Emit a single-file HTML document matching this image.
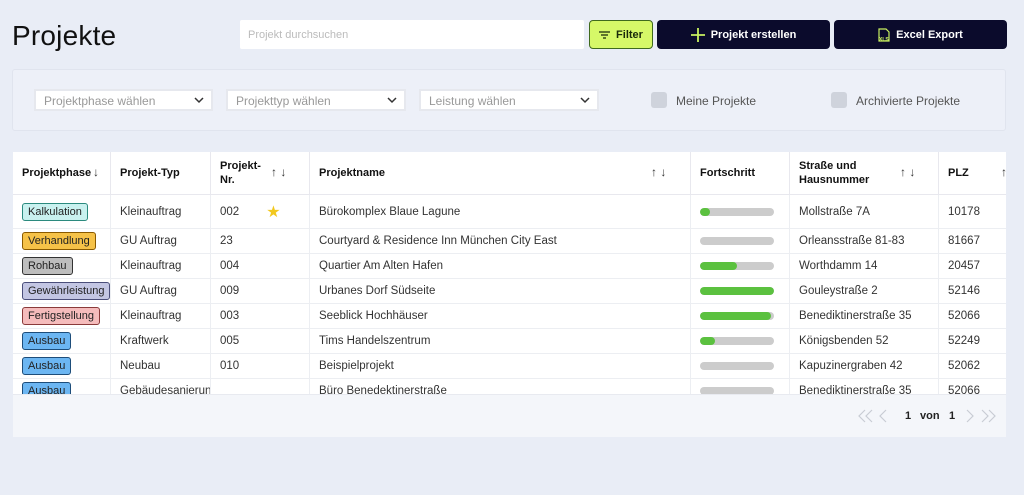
<!DOCTYPE html>
<html><head><meta charset="utf-8"><style>
*{box-sizing:border-box;margin:0;padding:0}
body{width:1024px;height:495px;background:#e9edf6;font-family:"Liberation Sans",sans-serif;color:#222;position:relative;overflow:hidden}
.a{position:absolute}
h1{position:absolute;left:12px;top:20px;font-size:28px;font-weight:400;color:#111;letter-spacing:0.2px}
.search{left:240px;top:20px;width:344px;height:29px;background:#fff;border-radius:2px;font-size:11px;color:#bbb;padding:9px 8px}
.btn{top:20px;height:29px;border-radius:4px;font-size:11px;font-weight:700;display:flex;align-items:center;justify-content:center;gap:6px}
.dark{background:#0b0b2c;color:#fff}
.panel{left:12px;top:69px;width:994px;height:62px;background:#edf0f8;border:1px solid #e0e4ee;border-radius:3px}
.sel{top:89px;height:22px;background:#fff;border:2px solid #e6e8ee;font-size:12px;color:#999;padding:3px 8px}
.sel svg{position:absolute;right:7px;top:6px}
.cb{top:92px;width:16px;height:16px;background:#cfd3dc;border-radius:3px}
.cbl{top:94px;font-size:12px;color:#555}
.tbl{left:13px;top:152px;width:993px;height:285px;background:#fff;overflow:hidden}
.hd{position:absolute;top:0;height:43px;font-size:11px;font-weight:700;color:#111;display:flex;align-items:center;padding-left:9px;border-right:1px solid #e8e8ee;border-bottom:1px solid #e8e8ee;line-height:14px}
.row{position:absolute;left:0;width:993px;border-bottom:1px solid #eceef2;font-size:11.5px;color:#333}
.row div.c{position:absolute;top:0;height:100%;display:flex;align-items:center;padding-left:9px;border-right:1px solid #eceef2;white-space:nowrap;overflow:hidden}
.bd{font-size:11px;padding:2px 5px;border-radius:3px;border:1.5px solid #333;color:#222;line-height:12px}
.bar{width:74px;height:8px;border-radius:4px;background:#ccc;position:relative;overflow:hidden}
.bar i{position:absolute;left:0;top:0;height:8px;background:#5bc13f;border-radius:4px}
.foot{position:absolute;left:0;top:242px;width:993px;height:43px;background:#f4f6fa;border-top:1px solid #e8eaf0}
.arr{font-size:12px;color:#333;font-weight:400;position:absolute}
</style></head><body>
<h1>Projekte</h1>
<div class="a search">Projekt durchsuchen</div>
<div class="a btn" style="left:589px;width:64px;background:#d6f868;border:1.5px solid #3f6a1d;color:#1a2a0a"><svg width="11" height="8"><path d="M0 1h11M2 4h7M4 7h3" stroke="#1a2a0a" stroke-width="1.3"/></svg>Filter</div>
<div class="a btn dark" style="left:657px;width:173px"><svg width="14" height="14"><path d="M7 0v14M0 7h14" stroke="#c8f060" stroke-width="1.8"/></svg>Projekt erstellen</div>
<div class="a btn dark" style="left:834px;width:173px"><svg width="12" height="14"><path d="M1 1h7l3 3v9H1z" fill="none" stroke="#c8f060" stroke-width="1.2"/><text x="1" y="13" font-size="5" fill="#c8f060" font-family="Liberation Sans">XLS</text></svg>Excel Export</div>
<div class="a panel"></div>
<div class="a sel" style="left:34px;width:179px">Projektphase wählen<svg width="10" height="7"><path d="M1 1l4 4 4-4" fill="none" stroke="#333" stroke-width="1.5"/></svg></div>
<div class="a sel" style="left:226px;width:180px">Projekttyp wählen<svg width="10" height="7"><path d="M1 1l4 4 4-4" fill="none" stroke="#333" stroke-width="1.5"/></svg></div>
<div class="a sel" style="left:419px;width:180px">Leistung wählen<svg width="10" height="7"><path d="M1 1l4 4 4-4" fill="none" stroke="#333" stroke-width="1.5"/></svg></div>
<div class="a cb" style="left:651px"></div><div class="a cbl" style="left:676px">Meine Projekte</div>
<div class="a cb" style="left:831px"></div><div class="a cbl" style="left:856px">Archivierte Projekte</div>

<div class="a tbl">
<div class="hd" style="left:0;width:98px">Projektphase<span class="arr" style="left:80px;top:13px">↓</span></div>
<div class="hd" style="left:98px;width:100px">Projekt-Typ</div>
<div class="hd" style="left:198px;width:99px">Projekt-<br>Nr.<span class="arr" style="left:60px;top:13px">↑ ↓</span></div>
<div class="hd" style="left:297px;width:381px">Projektname<span class="arr" style="left:341px;top:13px">↑ ↓</span></div>
<div class="hd" style="left:678px;width:99px">Fortschritt</div>
<div class="hd" style="left:777px;width:149px">Straße und<br>Hausnummer<span class="arr" style="left:110px;top:13px">↑ ↓</span></div>
<div class="hd" style="left:926px;width:67px;border-right:0">PLZ<span class="arr" style="left:62px;top:13px">↑</span></div>

<div class="row" style="top:43px;height:34px">
<div class="c" style="left:0;width:98px"><span class="bd" style="background:#c9f1ef;border-color:#2b8a7e">Kalkulation</span></div>
<div class="c" style="left:98px;width:100px">Kleinauftrag</div>
<div class="c" style="left:198px;width:99px">002<span style="color:#f2c81e;font-size:16px;margin-left:27px">★</span></div>
<div class="c" style="left:297px;width:381px">Bürokomplex Blaue Lagune</div>
<div class="c" style="left:678px;width:99px"><div class="bar"><i style="width:10px"></i></div></div>
<div class="c" style="left:777px;width:149px">Mollstraße 7A</div>
<div class="c" style="left:926px;width:67px;border:0">10178</div></div>

<div class="row" style="top:77px;height:25px">
<div class="c" style="left:0;width:98px"><span class="bd" style="background:#f6c248;border-color:#8a5a00">Verhandlung</span></div>
<div class="c" style="left:98px;width:100px">GU Auftrag</div>
<div class="c" style="left:198px;width:99px">23</div>
<div class="c" style="left:297px;width:381px">Courtyard &amp; Residence Inn München City East</div>
<div class="c" style="left:678px;width:99px"><div class="bar"></div></div>
<div class="c" style="left:777px;width:149px">Orleansstraße 81-83</div>
<div class="c" style="left:926px;width:67px;border:0">81667</div></div>

<div class="row" style="top:102px;height:25px">
<div class="c" style="left:0;width:98px"><span class="bd" style="background:#bdbdbd">Rohbau</span></div>
<div class="c" style="left:98px;width:100px">Kleinauftrag</div>
<div class="c" style="left:198px;width:99px">004</div>
<div class="c" style="left:297px;width:381px">Quartier Am Alten Hafen</div>
<div class="c" style="left:678px;width:99px"><div class="bar"><i style="width:37px"></i></div></div>
<div class="c" style="left:777px;width:149px">Worthdamm 14</div>
<div class="c" style="left:926px;width:67px;border:0">20457</div></div>

<div class="row" style="top:127px;height:25px">
<div class="c" style="left:0;width:98px"><span class="bd" style="background:#c3c6e3;border-color:#4a4e7a">Gewährleistung</span></div>
<div class="c" style="left:98px;width:100px">GU Auftrag</div>
<div class="c" style="left:198px;width:99px">009</div>
<div class="c" style="left:297px;width:381px">Urbanes Dorf Südseite</div>
<div class="c" style="left:678px;width:99px"><div class="bar"><i style="width:74px"></i></div></div>
<div class="c" style="left:777px;width:149px">Gouleystraße 2</div>
<div class="c" style="left:926px;width:67px;border:0">52146</div></div>

<div class="row" style="top:152px;height:25px">
<div class="c" style="left:0;width:98px"><span class="bd" style="background:#f5bcbc;border-color:#8a3a3a">Fertigstellung</span></div>
<div class="c" style="left:98px;width:100px">Kleinauftrag</div>
<div class="c" style="left:198px;width:99px">003</div>
<div class="c" style="left:297px;width:381px">Seeblick Hochhäuser</div>
<div class="c" style="left:678px;width:99px"><div class="bar"><i style="width:71px"></i></div></div>
<div class="c" style="left:777px;width:149px">Benediktinerstraße 35</div>
<div class="c" style="left:926px;width:67px;border:0">52066</div></div>

<div class="row" style="top:177px;height:25px">
<div class="c" style="left:0;width:98px"><span class="bd" style="background:#6cb6f2;border-color:#1d4d7a">Ausbau</span></div>
<div class="c" style="left:98px;width:100px">Kraftwerk</div>
<div class="c" style="left:198px;width:99px">005</div>
<div class="c" style="left:297px;width:381px">Tims Handelszentrum</div>
<div class="c" style="left:678px;width:99px"><div class="bar"><i style="width:15px"></i></div></div>
<div class="c" style="left:777px;width:149px">Königsbenden 52</div>
<div class="c" style="left:926px;width:67px;border:0">52249</div></div>

<div class="row" style="top:202px;height:25px">
<div class="c" style="left:0;width:98px"><span class="bd" style="background:#6cb6f2;border-color:#1d4d7a">Ausbau</span></div>
<div class="c" style="left:98px;width:100px">Neubau</div>
<div class="c" style="left:198px;width:99px">010</div>
<div class="c" style="left:297px;width:381px">Beispielprojekt</div>
<div class="c" style="left:678px;width:99px"><div class="bar"></div></div>
<div class="c" style="left:777px;width:149px">Kapuzinergraben 42</div>
<div class="c" style="left:926px;width:67px;border:0">52062</div></div>

<div class="row" style="top:227px;height:25px">
<div class="c" style="left:0;width:98px"><span class="bd" style="background:#6cb6f2;border-color:#1d4d7a">Ausbau</span></div>
<div class="c" style="left:98px;width:100px">Gebäudesanierung</div>
<div class="c" style="left:198px;width:99px"></div>
<div class="c" style="left:297px;width:381px">Büro Benedektinerstraße</div>
<div class="c" style="left:678px;width:99px"><div class="bar"></div></div>
<div class="c" style="left:777px;width:149px">Benediktinerstraße 35</div>
<div class="c" style="left:926px;width:67px;border:0">52066</div></div>

<div class="foot">
<svg class="a" style="left:845px;top:14px" width="16" height="14"><path d="M7 1L1 7l6 6M14 1L8 7l6 6" fill="none" stroke="#c8ccd4" stroke-width="1.2"/></svg>
<svg class="a" style="left:866px;top:14px" width="9" height="14"><path d="M7 1L1 7l6 6" fill="none" stroke="#c8ccd4" stroke-width="1.2"/></svg>
<span class="a" style="left:892px;top:15px;font-size:11px;font-weight:700">1</span>
<span class="a" style="left:907px;top:15px;font-size:11px;font-weight:700">von</span>
<span class="a" style="left:936px;top:15px;font-size:11px;font-weight:700">1</span>
<svg class="a" style="left:953px;top:14px" width="9" height="14"><path d="M1 1l6 6-6 6" fill="none" stroke="#c8ccd4" stroke-width="1.2"/></svg>
<svg class="a" style="left:968px;top:14px" width="16" height="14"><path d="M1 1l6 6-6 6M8 1l6 6-6 6" fill="none" stroke="#c8ccd4" stroke-width="1.2"/></svg>
</div>
</div>
</body></html>
